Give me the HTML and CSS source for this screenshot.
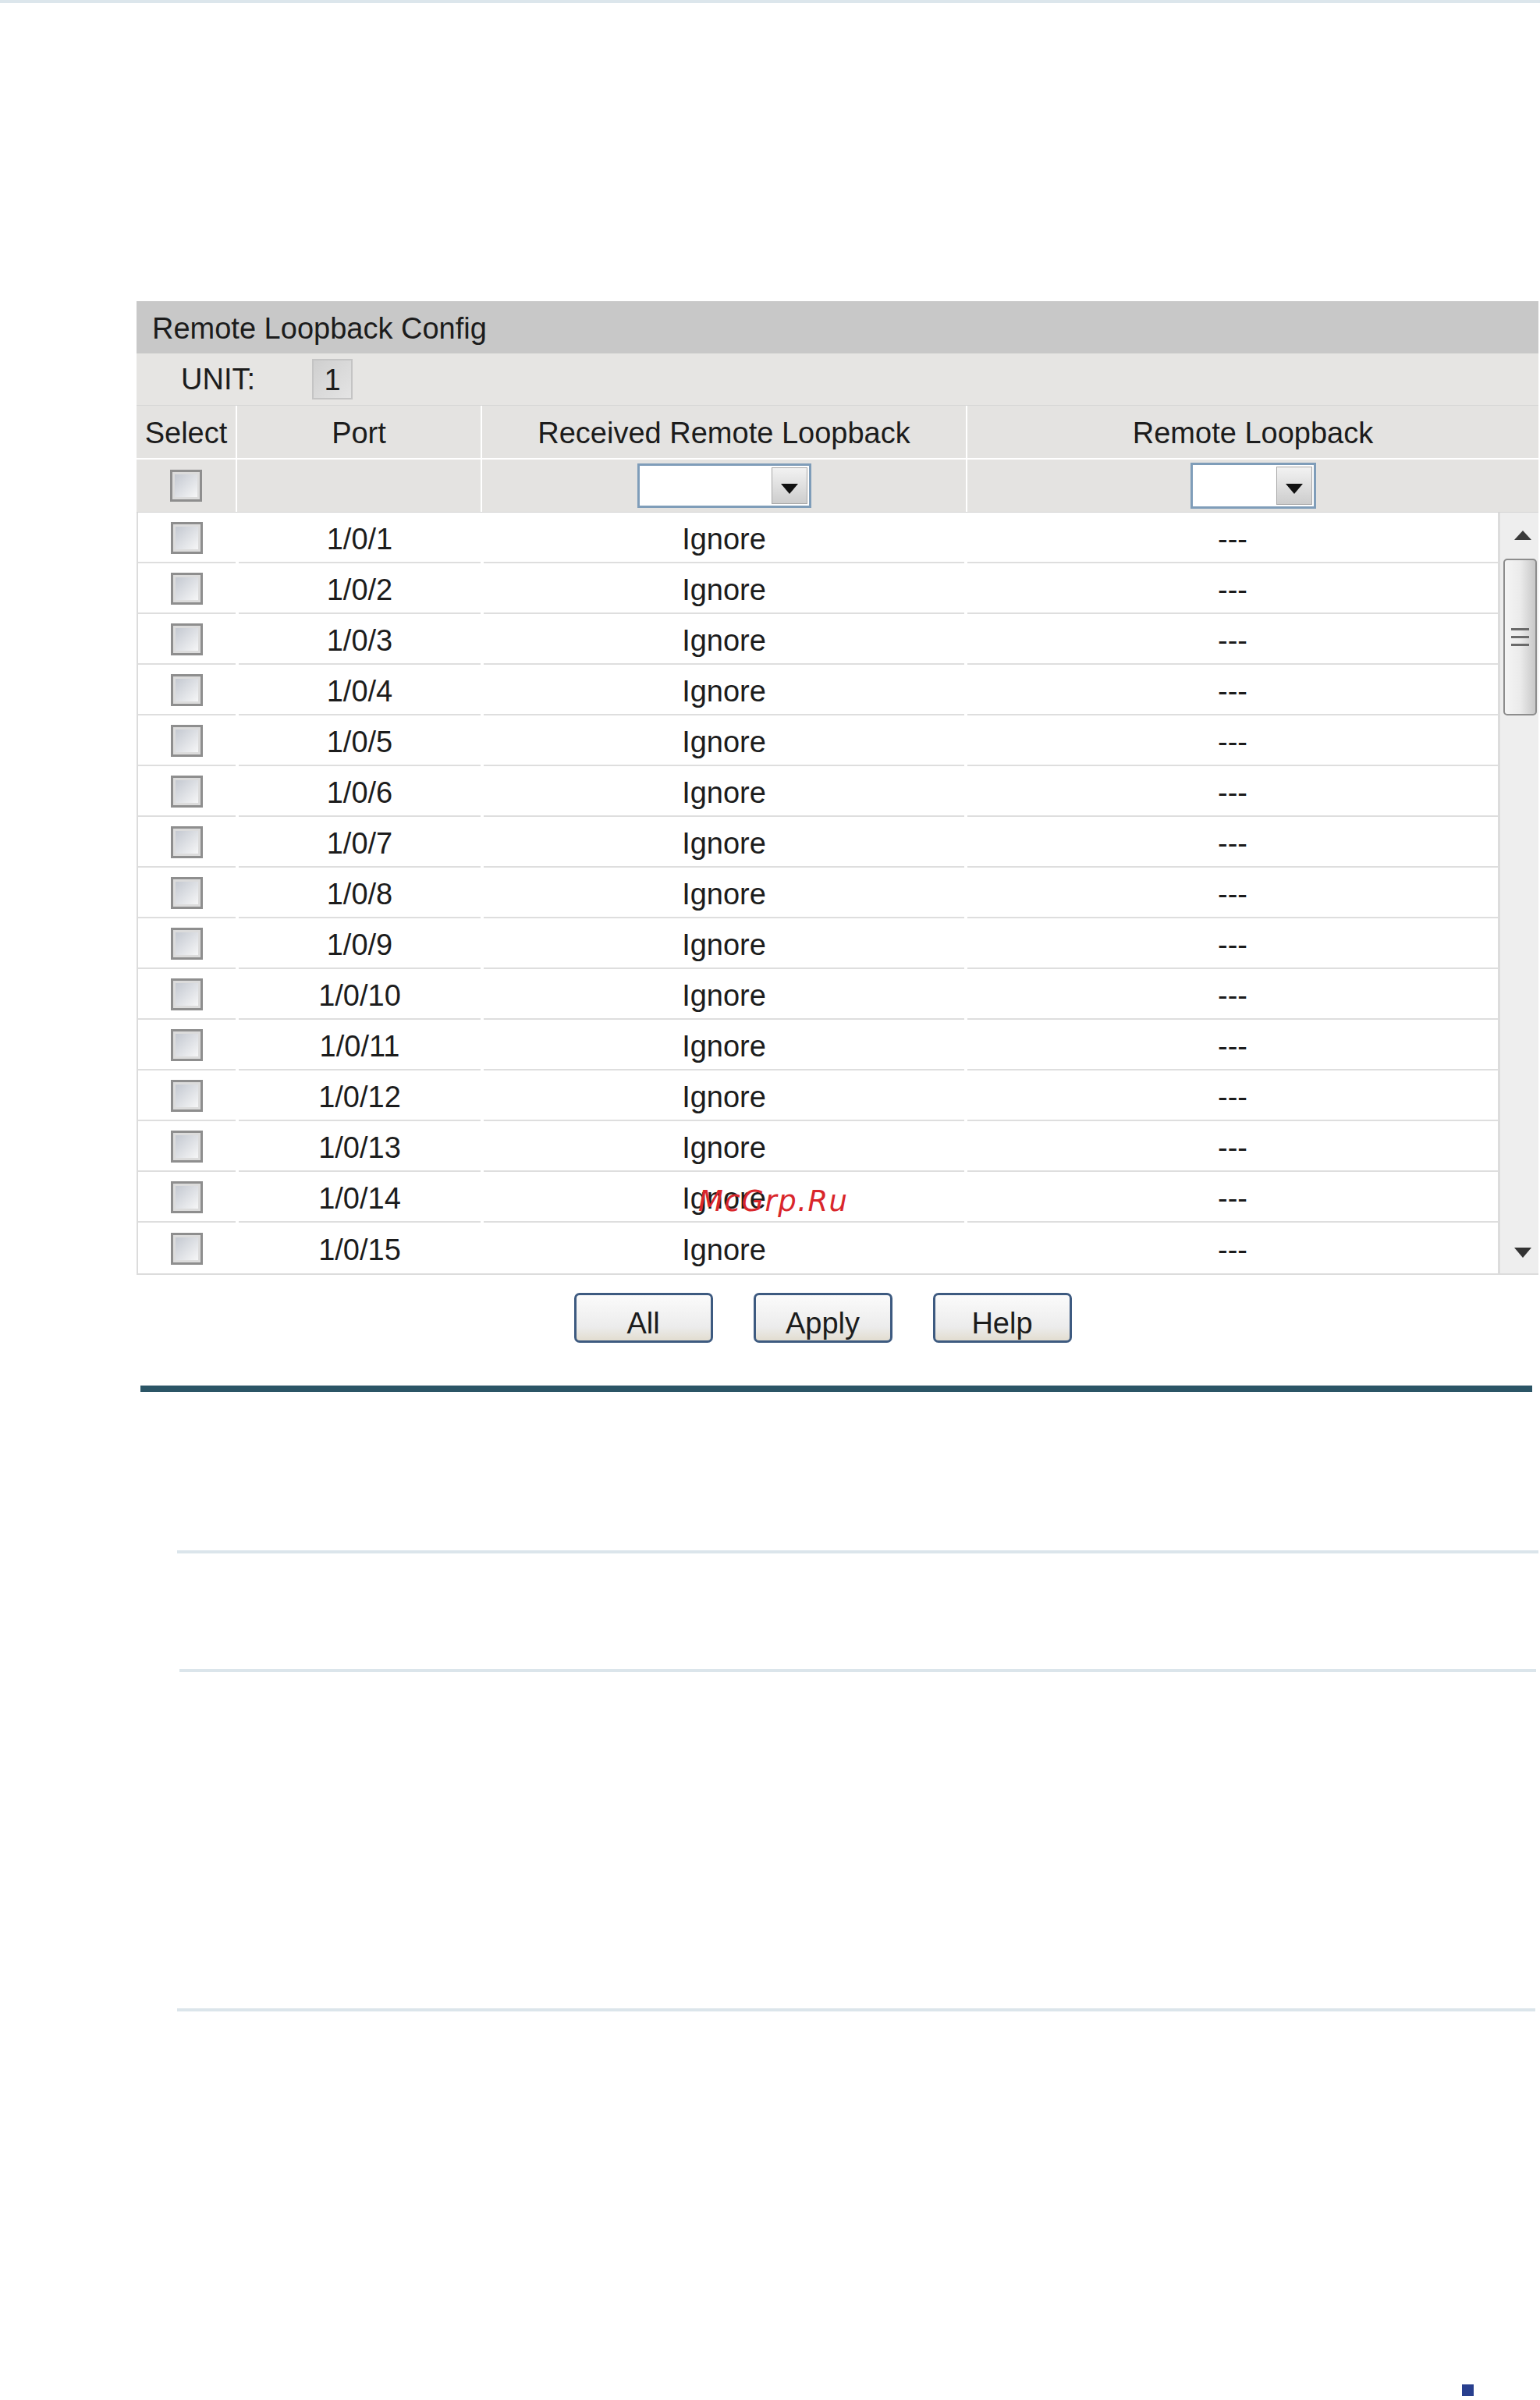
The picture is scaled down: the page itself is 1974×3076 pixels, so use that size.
FILE: index.html
```html
<!DOCTYPE html>
<html lang="en">

<head>
    <meta charset="UTF-8">
    <meta name="viewport" content="width=device-width, initial-scale=1.0">
    <title>Remote Loopback Config</title>
    <link rel="stylesheet" href="styles.css">
</head>

<body>
    <div class="top-rule"></div>

    <div class="panel">
        <div class="panel-title">Remote Loopback Config</div>
        <div class="unit-row">
            <span class="unit-label">UNIT:</span>
            <span class="unit-box">1</span>
        </div>

        <div class="head-grid">
            <div class="head-cell">Select</div>
            <div class="head-cell">Port</div>
            <div class="head-cell">Received Remote Loopback</div>
            <div class="head-cell">Remote Loopback</div>
        </div>
        <div class="filter-grid">
            <div class="filter-cell"><input type="checkbox" class="check"></div>
            <div class="filter-cell"></div>
            <div class="filter-cell">
                <div class="drop drop-wide"><span class="drop-field"></span><span class="drop-btn"><i class="tri-down"></i></span></div>
            </div>
            <div class="filter-cell">
                <div class="drop drop-narrow"><span class="drop-field"></span><span class="drop-btn"><i class="tri-down"></i></span></div>
            </div>
        </div>

        <div class="scroll-area">
            <div class="data-grid">
                <div class="cell"><input type="checkbox" class="check"></div><div class="cell">1/0/1</div><div class="cell">Ignore</div><div class="cell">---</div>
                <div class="cell"><input type="checkbox" class="check"></div><div class="cell">1/0/2</div><div class="cell">Ignore</div><div class="cell">---</div>
                <div class="cell"><input type="checkbox" class="check"></div><div class="cell">1/0/3</div><div class="cell">Ignore</div><div class="cell">---</div>
                <div class="cell"><input type="checkbox" class="check"></div><div class="cell">1/0/4</div><div class="cell">Ignore</div><div class="cell">---</div>
                <div class="cell"><input type="checkbox" class="check"></div><div class="cell">1/0/5</div><div class="cell">Ignore</div><div class="cell">---</div>
                <div class="cell"><input type="checkbox" class="check"></div><div class="cell">1/0/6</div><div class="cell">Ignore</div><div class="cell">---</div>
                <div class="cell"><input type="checkbox" class="check"></div><div class="cell">1/0/7</div><div class="cell">Ignore</div><div class="cell">---</div>
                <div class="cell"><input type="checkbox" class="check"></div><div class="cell">1/0/8</div><div class="cell">Ignore</div><div class="cell">---</div>
                <div class="cell"><input type="checkbox" class="check"></div><div class="cell">1/0/9</div><div class="cell">Ignore</div><div class="cell">---</div>
                <div class="cell"><input type="checkbox" class="check"></div><div class="cell">1/0/10</div><div class="cell">Ignore</div><div class="cell">---</div>
                <div class="cell"><input type="checkbox" class="check"></div><div class="cell">1/0/11</div><div class="cell">Ignore</div><div class="cell">---</div>
                <div class="cell"><input type="checkbox" class="check"></div><div class="cell">1/0/12</div><div class="cell">Ignore</div><div class="cell">---</div>
                <div class="cell"><input type="checkbox" class="check"></div><div class="cell">1/0/13</div><div class="cell">Ignore</div><div class="cell">---</div>
                <div class="cell"><input type="checkbox" class="check"></div><div class="cell">1/0/14</div><div class="cell">Ignore</div><div class="cell">---</div>
                <div class="cell"><input type="checkbox" class="check"></div><div class="cell">1/0/15</div><div class="cell">Ignore</div><div class="cell">---</div>
            </div>
            <div class="scrollbar">
                <i class="tri-up"></i>
                <div class="thumb"><span></span><span></span><span></span></div>
                <div class="track-fill"></div>
                <i class="tri-down tri-dark"></i>
            </div>
        </div>
    </div>

    <div class="actions">
        <button class="btn">All</button>
        <button class="btn">Apply</button>
        <button class="btn">Help</button>
    </div>

    <div class="rule-dark"></div>
    <div class="rule-light rule-one"></div>
    <div class="rule-light rule-two"></div>
    <div class="rule-light rule-three"></div>

    <div class="page-mark"></div>

    <div class="watermark">McGrp.Ru</div>
</body>

</html>
```

FILE: styles.css
```css
body {
    margin: 0;
    height: 3076px;
    position: relative;
    background-color: #ffffff;
    font-family: "Liberation Sans", Arial, sans-serif;
    font-size: 38px;
    color: #1c1c1c;
}

.top-rule {
    height: 4px;
    background-color: #dce6ec;
}

.panel {
    margin: 382px 2px 0 175px;
}

.panel-title {
    height: 67px;
    line-height: 71px;
    padding-left: 20px;
    background-color: #c8c8c8;
}

.unit-row {
    height: 66px;
    display: flex;
    align-items: center;
    padding-left: 57px;
    background-color: #e6e5e3;
    border-bottom: 1px solid #d6d6d6;
}

.unit-label {
    width: 168px;
}

.unit-box {
    width: 48px;
    height: 48px;
    line-height: 50px;
    text-align: center;
    border: 2px solid #c4c4c4;
    background: linear-gradient(135deg, #cfcfcf, #e4e4e4);
}

.head-grid,
.filter-grid {
    display: grid;
    grid-template-columns: 127px 314px 622px 1fr;
    background-color: #e4e3e1;
}

.head-grid {
    border-bottom: 2px solid #ffffff;
}

.filter-grid {
    border-bottom: 1px solid #d4d4d4;
}

.head-cell,
.filter-cell {
    height: 67px;
    display: flex;
    align-items: center;
    justify-content: center;
}

.head-cell+.head-cell,
.filter-cell+.filter-cell {
    border-left: 2px solid #ffffff;
}

.head-cell {
    padding-top: 3px;
    box-sizing: border-box;
}

/* fake dropdowns */
.drop {
    display: flex;
    height: 57px;
    box-sizing: border-box;
    border: 3px solid #7f9db9;
    background-color: #ffffff;
}

.drop-wide {
    width: 223px;
}

.drop-narrow {
    width: 161px;
    height: 59px;
}

.drop-field {
    flex: 1;
}

.drop-btn {
    width: 46px;
    margin: 2px;
    display: flex;
    align-items: center;
    justify-content: center;
    padding-top: 8px;
    box-sizing: border-box;
    border: 1px solid #a8a8a8;
    background: linear-gradient(#f2f2f2, #cdcdcd);
}

.tri-down,
.tri-up {
    display: block;
    width: 0;
    height: 0;
    border-left: 11px solid transparent;
    border-right: 11px solid transparent;
}

.tri-down {
    border-top: 13px solid #111111;
}

.tri-up {
    border-bottom: 12px solid #3a3a3a;
}

.check {
    appearance: none;
    -webkit-appearance: none;
    margin: 0;
    width: 41px;
    height: 41px;
    box-sizing: border-box;
    border: 3px solid #8e8e8e;
    box-shadow: inset 0 0 0 3px #dcdcdc;
    background: linear-gradient(135deg, #bfc4cd, #fbfbfb);
}

/* data rows */
.scroll-area {
    display: flex;
    height: 977px;
    box-sizing: border-box;
    border-left: 2px solid #dcdcdc;
    border-bottom: 2px solid #dcdcdc;
    background-color: #ffffff;
}

.data-grid {
    flex: 1;
    display: grid;
    grid-template-columns: 125px 310px 616px 1fr;
    grid-auto-rows: 65px;
    column-gap: 4px;
    align-content: start;
}

.cell {
    display: flex;
    align-items: center;
    justify-content: center;
    padding-top: 6px;
    box-sizing: border-box;
    border-bottom: 2px solid #dedede;
}

.cell:nth-child(4n+1) {
    padding-top: 2px;
}

.data-grid .cell:nth-last-child(-n+4) {
    border-bottom: none;
}

.scrollbar {
    width: 52px;
    display: flex;
    flex-direction: column;
    align-items: center;
    padding-top: 23px;
    padding-bottom: 20px;
    box-sizing: border-box;
    border-left: 3px solid #dcdcdc;
    background-color: #eeeeee;
}

.scrollbar .tri-up,
.scrollbar .tri-down {
    margin-left: 8px;
}

.tri-dark {
    border-top-color: #333333;
}

.thumb {
    width: 43px;
    height: 201px;
    margin-top: 24px;
    margin-left: 2px;
    box-sizing: border-box;
    border: 2px solid #8d8d8d;
    border-radius: 5px;
    background: linear-gradient(to right, #f5f5f5, #ebebeb 50%, #c8c8c8);
    display: flex;
    flex-direction: column;
    align-items: center;
    justify-content: center;
    gap: 7px;
}

.thumb span {
    width: 23px;
    height: 3px;
    background-color: #6a6a6a;
}

.track-fill {
    flex: 1;
}

/* buttons */
.actions {
    display: flex;
    justify-content: center;
    gap: 52px;
    margin: 23px 2px 0 175px;
    padding-right: 38px;
}

.btn {
    width: 178px;
    height: 64px;
    padding: 14px 0 0;
    font-family: "Liberation Sans", Arial, sans-serif;
    font-size: 38px;
    color: #1c1c1c;
    border: 3px solid #3d5a80;
    border-radius: 7px;
    background: linear-gradient(#fbfbfb, #ececec 70%, #e2ddd0);
}

.rule-dark {
    margin: 54px 10px 0 180px;
    height: 8px;
    border-top: 1px solid #c7d0d5;
    background-color: #2b5566;
}

.rule-light {
    height: 4px;
    background-color: #dbe5eb;
}

.rule-one {
    margin: 203px 2px 0 227px;
}

.rule-two {
    margin: 148px 5px 0 230px;
}

.rule-three {
    margin: 431px 6px 0 227px;
}

.page-mark {
    width: 15px;
    height: 15px;
    margin: 478px 0 0 1874px;
    background-color: #293f8e;
}

.watermark {
    position: absolute;
    left: 895px;
    top: 1521px;
    font-family: "DejaVu Sans", sans-serif;
    font-style: italic;
    font-size: 37px;
    line-height: 1;
    letter-spacing: 1.5px;
    color: #d9262b;
}
```
